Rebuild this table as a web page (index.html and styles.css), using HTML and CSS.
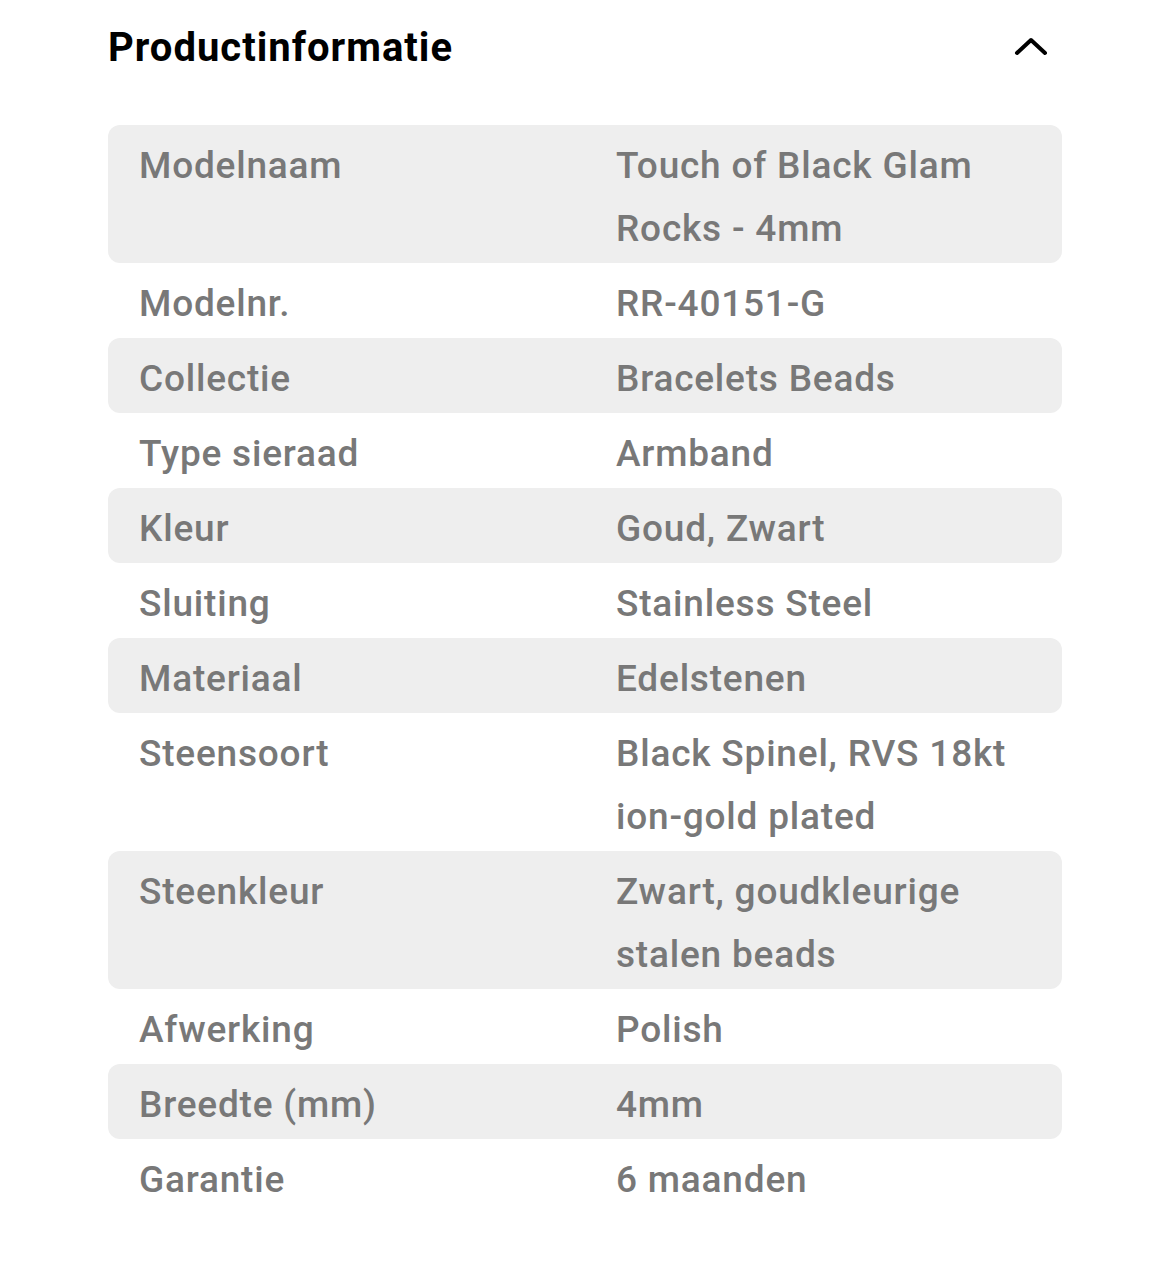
FILE: index.html
```html
<!DOCTYPE html>
<html lang="nl">
<head>
<meta charset="utf-8">
<title>Productinformatie</title>
<link rel="stylesheet" href="styles.css">
</head>
<body>
<section class="panel">
  <header class="panel-head">
    <h2 class="panel-title">Productinformatie</h2>
    <svg class="chevron" width="34" height="22" viewBox="0 0 34 22" aria-hidden="true">
      <path d="M3 18 L17 5 L31 18" fill="none" stroke="#000" stroke-width="4" stroke-linecap="round" stroke-linejoin="round"/>
    </svg>
  </header>
  <div class="specs">
    <div class="row"><div class="cell">Modelnaam</div><div class="cell">Touch of Black Glam Rocks - 4mm</div></div>
    <div class="row"><div class="cell">Modelnr.</div><div class="cell">RR-40151-G</div></div>
    <div class="row"><div class="cell">Collectie</div><div class="cell">Bracelets Beads</div></div>
    <div class="row"><div class="cell">Type sieraad</div><div class="cell">Armband</div></div>
    <div class="row"><div class="cell">Kleur</div><div class="cell">Goud, Zwart</div></div>
    <div class="row"><div class="cell">Sluiting</div><div class="cell">Stainless Steel</div></div>
    <div class="row"><div class="cell">Materiaal</div><div class="cell">Edelstenen</div></div>
    <div class="row"><div class="cell">Steensoort</div><div class="cell">Black Spinel, RVS 18kt ion-gold plated</div></div>
    <div class="row"><div class="cell">Steenkleur</div><div class="cell">Zwart, goudkleurige stalen beads</div></div>
    <div class="row"><div class="cell">Afwerking</div><div class="cell">Polish</div></div>
    <div class="row"><div class="cell">Breedte (mm)</div><div class="cell">4mm</div></div>
    <div class="row"><div class="cell">Garantie</div><div class="cell">6 maanden</div></div>
  </div>
</section>
</body>
</html>
```

FILE: styles.css
```css
html, body {
  margin: 0;
  padding: 0;
  background: #fff;
}
body {
  font-family: Roboto, "Liberation Sans", sans-serif;
}
.panel {
  width: 954px;
  margin-left: 108px;
  padding-bottom: 60px;
}
.panel-head {
  height: 95px;
  display: flex;
  align-items: center;
  justify-content: space-between;
}
.panel-title {
  margin: 0;
  font-size: 40px;
  font-weight: 700;
  color: #000;
  letter-spacing: 1px;
  line-height: 1;
}
.chevron {
  margin-right: 14px;
  margin-top: -4px;
}
.specs {
  margin-top: 30px;
}
.row {
  display: grid;
  grid-template-columns: 1fr 1fr;
  padding: 9px 0 3px;
  border-radius: 12px;
}
.row:nth-child(odd) {
  background: #eeeeee;
}
.cell {
  padding: 0 31px;
  font-size: 37px;
  font-weight: 500;
  line-height: 63px;
  color: #787878;
  letter-spacing: 0.8px;
}
```
